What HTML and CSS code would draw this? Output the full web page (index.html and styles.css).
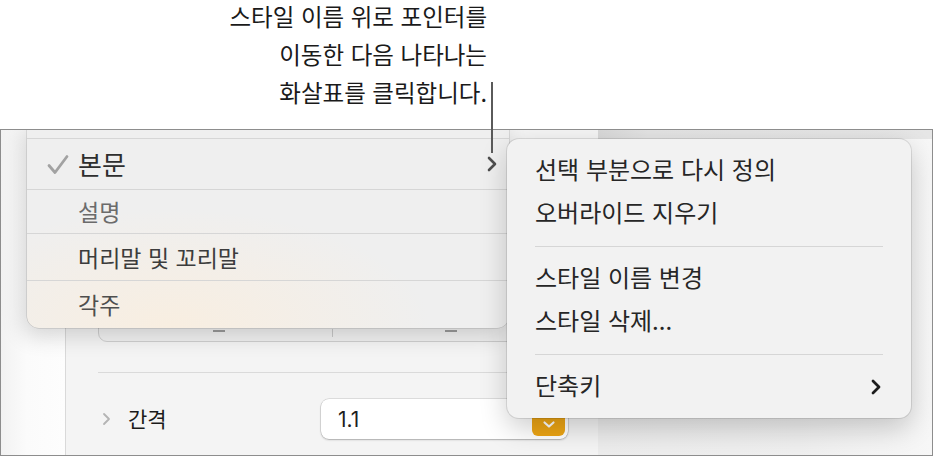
FILE: index.html
```html
<!DOCTYPE html>
<html lang="ko">
<head>
<meta charset="utf-8">
<link rel="stylesheet" href="styles.css">
</head>
<body>
<div class="page">
  <header class="note">
    <p>스타일 이름 위로 포인터를<br>이동한 다음 나타나는<br>화살표를 클릭합니다.</p>
  </header>
  <div class="frame">
    <div class="app">
      <div class="gutter"></div>
      <section class="panel">
        <div class="box">
          <span class="dash dash-a"></span>
          <span class="tick"></span>
          <span class="dash dash-b"></span>
        </div>
        <div class="rule"></div>
        <div class="spacing-row">
          <svg class="disclosure" width="9" height="14" viewBox="0 0 9 14"><path d="M2 2l5 5-5 5" fill="none" stroke="#b4b4b4" stroke-width="1.8" stroke-linecap="round" stroke-linejoin="round"/></svg>
          <span class="label">간격</span>
          <div class="field">
            <span class="value">1.1</span>
            <span class="stepper"><svg width="14" height="9" viewBox="0 0 14 9"><path d="M2.5 2.5l4.5 4 4.5-4" fill="none" stroke="#fff" stroke-width="2.2" stroke-linecap="round" stroke-linejoin="round"/></svg></span>
          </div>
        </div>
      </section>
      <div class="backdrop"><div class="toolbar-strip"></div></div>
    </div>

    <div class="menu styles-menu">
      <div class="row row-main">
        <svg class="check" width="24" height="24" viewBox="0 0 24 24"><path d="M3 12.5l6 7L21 3.5" fill="none" stroke="#a2a2a2" stroke-width="2.8" stroke-linecap="round" stroke-linejoin="round"/></svg>
        <span class="item big">본문</span>
        <svg class="arrow" width="12" height="18" viewBox="0 0 12 18"><path d="M3 3l6 6-6 6" fill="none" stroke="#4e4e4e" stroke-width="2.6" stroke-linecap="round" stroke-linejoin="round"/></svg>
      </div>
      <div class="row row-b"><span class="item muted">설명</span></div>
      <div class="row row-c"><span class="item">머리말 및 꼬리말</span></div>
      <div class="row row-d"><span class="item soft">각주</span></div>
    </div>

    <div class="menu submenu">
      <div class="sub-item">선택 부분으로 다시 정의</div>
      <div class="sub-item">오버라이드 지우기</div>
      <div class="sub-sep"></div>
      <div class="sub-item">스타일 이름 변경</div>
      <div class="sub-item">스타일 삭제...</div>
      <div class="sub-sep"></div>
      <div class="sub-item has-arrow">단축키
        <svg width="12" height="18" viewBox="0 0 12 18"><path d="M3 3l6 6-6 6" fill="none" stroke="#1c1c1c" stroke-width="2.8" stroke-linecap="round" stroke-linejoin="round"/></svg>
      </div>
    </div>
  </div>
  <div class="leader"></div>
</div>
</body>
</html>
```

FILE: styles.css
```css
* { box-sizing: border-box; }

html, body {
  margin: 0;
  padding: 0;
  background: #ffffff;
}

body {
  font-family: "Noto Sans CJK KR", "Noto Sans", sans-serif;
  color: #1f1f1f;
}

.page {
  position: relative;
  width: 935px;
  height: 457px;
  overflow: hidden;
}

/* annotation */
.note {
  display: flow-root;
  height: 129px;
  padding-right: 448px;
  text-align: right;
}

.note p {
  margin: -3px 0 0;
  font-size: 23.5px;
  line-height: 38px;
  color: #1a1a1a;
}

.leader {
  position: absolute;
  left: 491px;
  top: 82px;
  width: 2px;
  height: 71px;
  background: #5a5a5a;
}

/* screenshot frame */
.frame {
  position: relative;
  width: 933px;
  height: 327px;
  border: 1px solid #8d8d8d;
  overflow: hidden;
  background: #f6f6f6;
}

.app {
  display: flex;
  height: 100%;
}

.gutter {
  width: 64px;
  flex: none;
  background: linear-gradient(90deg, #f2f2f2 0%, #fbfbfb 40%, #fdfdfd 100%);
}

.panel {
  width: 533px;
  flex: none;
  border-left: 1px solid #d9d9d9;
  background: #f4f4f4;
  padding: 100px 30px 0 32px;
  display: flex;
  flex-direction: column;
}

.box {
  position: relative;
  height: 112px;
  border: 1px solid #cfcfcf;
  border-radius: 9px;
  background: #f1f1f1;
}

.dash {
  position: absolute;
  bottom: 9px;
  width: 12px;
  height: 2px;
  background: #9a9a9a;
}
.dash-a { left: 114px; }
.dash-b { left: 346px; }

.tick {
  position: absolute;
  bottom: 4px;
  left: 233px;
  width: 1px;
  height: 8px;
  background: #c8c8c8;
}

.rule {
  margin-top: 30px;
  border-top: 1px solid #dadada;
}

.spacing-row {
  display: flex;
  align-items: center;
  margin-top: 26px;
  height: 40px;
}

.disclosure {
  margin-left: 4px;
  flex: none;
}

.label {
  margin-left: 17px;
  margin-bottom: 2px;
  font-size: 21px;
  color: #1a1a1a;
}

.field {
  margin-left: auto;
  width: 247px;
  height: 40px;
  border-radius: 8px;
  background: #ffffff;
  box-shadow: 0 0 0 0.5px rgba(0,0,0,0.18), 0 1px 2px rgba(0,0,0,0.22);
  display: flex;
  align-items: center;
  justify-content: space-between;
  padding: 0 3px 0 17px;
}

.value {
  font-family: "Inter", "Noto Sans", sans-serif;
  font-size: 21px;
  color: #1f1f1f;
}

.stepper {
  width: 33px;
  height: 34px;
  border-radius: 6px;
  background: #eda514;
  display: flex;
  align-items: flex-end;
  justify-content: center;
  padding-bottom: 7px;
}

.backdrop {
  flex: 1;
  background: linear-gradient(90deg, #ececec 0%, #efefef 60%, #f7f7f7 100%);
}

.toolbar-strip {
  height: 9px;
  background: linear-gradient(90deg, #d8d8d8 0%, #e3e3e3 15%, #e6e6e6 100%);
}

/* menus */
.menu {
  position: absolute;
}

.styles-menu {
  left: 26px;
  top: -10px;
  width: 482px;
  padding-top: 18px;
  border-radius: 0 0 12px 12px;
  background:
    radial-gradient(ellipse 260px 120px at 30% 100%, rgba(250,238,222,0.85) 0%, rgba(248,240,230,0) 100%),
    #efefef;
  box-shadow: 0 0 0 0.5px rgba(0,0,0,0.18), -4px 8px 22px rgba(0,0,0,0.16);
}

.row {
  position: relative;
  display: flex;
  align-items: center;
  border-top: 1px solid #d6d6d6;
  padding-left: 51px;
  padding-bottom: 2px;
}

.row-main { height: 51px; }
.row-b { height: 44px; }
.row-c { height: 47px; padding-bottom: 0; }
.row-d { height: 48px; border-radius: 0 0 12px 12px; }

.check {
  position: absolute;
  left: 19px;
  top: 14px;
}

.arrow {
  position: absolute;
  left: 459px;
  top: 16px;
}

.item {
  font-size: 23px;
  color: #3c3c3c;
}

.item.big {
  font-size: 26px;
  color: #2e2e2e;
}

.item.muted { color: #6b6b6b; }
.item.soft { color: #4e4e4e; }

.submenu {
  left: 506px;
  top: 9px;
  width: 404px;
  height: 279px;
  padding: 10px 28px;
  border-radius: 12px;
  background: #f2f2f2;
  box-shadow: 0 0 0 1px rgba(0,0,0,0.10), 0 10px 28px rgba(0,0,0,0.20);
}

.sub-item {
  height: 43px;
  display: flex;
  align-items: center;
  padding-bottom: 4px;
  font-size: 24px;
  color: #262626;
}

.sub-item.has-arrow {
  justify-content: space-between;
}

.sub-item.has-arrow svg {
  margin-right: 1px;
  margin-top: 4px;
}

.sub-sep {
  height: 22px;
  display: flex;
  align-items: center;
}

.sub-sep::before {
  content: "";
  display: block;
  width: 100%;
  border-top: 1.5px solid #d6d6d6;
}
```
